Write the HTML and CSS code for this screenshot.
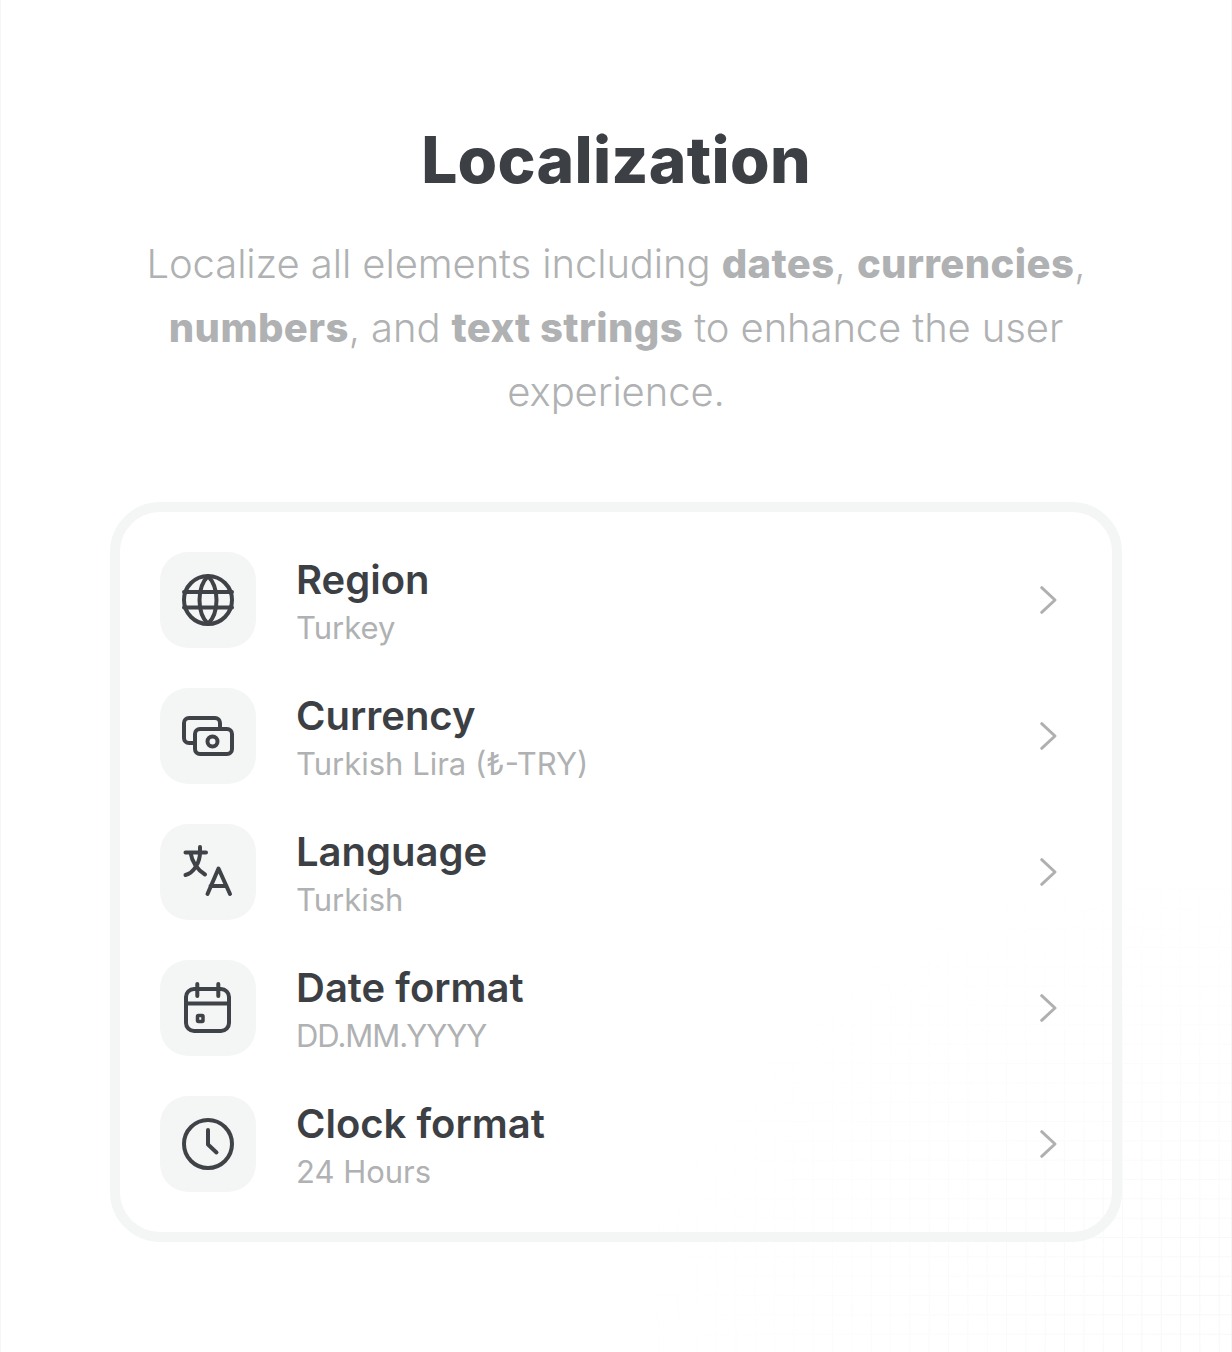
FILE: index.html
```html
<!DOCTYPE html>
<html lang="en">
<head>
<meta charset="utf-8">
<title>Localization</title>
<link rel="stylesheet" href="styles.css">
</head>
<body>
<div class="grid-bg"></div>
<main class="page">
  <h1 class="title">Localization</h1>
  <p class="lead">Localize all elements including <b>dates</b>, <b>currencies</b>, <b>numbers</b>, and <b>text strings</b> to enhance the user experience.</p>
  <section class="card">
    <div class="row">
      <div class="icon-box">
        <svg class="icon" viewBox="0 0 64 64"><circle cx="32" cy="32" r="24"/><path d="M8 24H56M8 39.500H56"/><path d="M32 8C26 14 23.500 24 23.500 32C23.500 40 26 50 32 56C38 50 40.500 40 40.500 32C40.500 24 38 14 32 8Z"/></svg>
      </div>
      <div class="text"><div class="label">Region</div><div class="sub">Turkey</div></div>
      <svg class="chev" viewBox="0 0 48 48"><path d="M17.7 11.700L31 24L17.700 36.300"/></svg>
    </div>
    <div class="row">
      <div class="icon-box">
        <svg class="icon" viewBox="0 0 64 64"><path d="M44 25V19a5 5 0 0 0-5-5H13a5 5 0 0 0-5 5V34a5 5 0 0 0 5 5H19"/><rect x="19" y="25" width="37" height="25" rx="5"/><circle cx="36.500" cy="37.500" r="5"/></svg>
      </div>
      <div class="text"><div class="label">Currency</div><div class="sub">Turkish Lira (₺-TRY)</div></div>
      <svg class="chev" viewBox="0 0 48 48"><path d="M17.7 11.700L31 24L17.700 36.300"/></svg>
    </div>
    <div class="row">
      <div class="icon-box">
        <svg class="icon" viewBox="0 0 64 64"><path d="M9.500 12.500H30M24 7V12.500C24 22 18 33 9.500 35M14.500 12.500C16 22 22 30 29 34.500"/><path d="M31.500 54L42.500 28.500L54 54M34.500 46H50.500"/></svg>
      </div>
      <div class="text"><div class="label">Language</div><div class="sub">Turkish</div></div>
      <svg class="chev" viewBox="0 0 48 48"><path d="M17.7 11.700L31 24L17.700 36.300"/></svg>
    </div>
    <div class="row">
      <div class="icon-box">
        <svg class="icon" viewBox="0 0 64 64"><rect x="10" y="13" width="43" height="42" rx="8"/><path d="M21.300 8V20M42.300 8V20M10 27.500H53"/><rect class="thick" x="21.500" y="39.500" width="5.500" height="6" rx="1"/></svg>
      </div>
      <div class="text"><div class="label">Date format</div><div class="sub tight">DD.MM.YYYY</div></div>
      <svg class="chev" viewBox="0 0 48 48"><path d="M17.7 11.700L31 24L17.700 36.300"/></svg>
    </div>
    <div class="row">
      <div class="icon-box">
        <svg class="icon" viewBox="0 0 64 64"><circle cx="32" cy="32" r="24"/><path d="M32 18V32.500L40.500 40.500"/></svg>
      </div>
      <div class="text"><div class="label">Clock format</div><div class="sub">24 Hours</div></div>
      <svg class="chev" viewBox="0 0 48 48"><path d="M17.7 11.700L31 24L17.700 36.300"/></svg>
    </div>
  </section>
</main>
</body>
</html>
```
FILE: styles.css
```css
* { box-sizing: border-box; }
html, body { margin: 0; padding: 0; height: 100%; }
body {
  position: relative;
  width: 1232px;
  height: 1352px;
  overflow: hidden;
  background: #fff;
  border-left: 1px solid #f6f6f6;
  border-right: 1px solid #f6f6f6;
  font-family: "Inter", "Liberation Sans", sans-serif;
}
.grid-bg {
  position: absolute;
  inset: 0;
  background-image:
    linear-gradient(to right, #f3f5f4 1px, transparent 1px),
    linear-gradient(to bottom, #f3f5f4 1px, transparent 1px);
  background-size: 19.33px 19.33px;
  -webkit-mask-image: radial-gradient(ellipse 600px 500px at 100% 100%, rgba(0,0,0,.8), transparent);
  mask-image: radial-gradient(ellipse 600px 500px at 100% 100%, rgba(0,0,0,.8), transparent);
}
.page {
  position: relative;
  display: flex;
  flex-direction: column;
  align-items: center;
  padding-top: 120px;
}
.title {
  margin: 0;
  font-size: 64px;
  line-height: 80px;
  font-weight: 800;
  letter-spacing: 0.3px;
  color: #3c3f44;
}
.lead {
  width: 960px;
  margin: 32px 0 0;
  font-size: 40px;
  line-height: 64px;
  font-weight: 300;
  letter-spacing: -0.1px;
  color: #afb1b2;
  text-align: center;
}
.lead b { font-weight: 800; letter-spacing: 0.4px; }
.card {
  width: 1012px;
  margin-top: 78px;
  padding: 40px;
  border: 10px solid #f4f6f5;
  border-radius: 50px;
  display: flex;
  flex-direction: column;
  gap: 40px;
}
.row { display: flex; align-items: center; gap: 40px; }
.icon-box {
  flex: none;
  width: 96px;
  height: 96px;
  border-radius: 28px;
  background: #f4f6f5;
  display: flex;
  align-items: center;
  justify-content: center;
}
.icon {
  width: 64px;
  height: 64px;
  fill: none;
  stroke: #3f4247;
  stroke-width: 4;
  stroke-linecap: round;
  stroke-linejoin: round;
}
.icon .thick { stroke-width: 3.500; }
.text { flex: 1; height: 96px; padding-top: 4px; }
.label {
  font-size: 40px;
  line-height: 48px;
  font-weight: 600;
  color: #3c3f44;
}
.sub {
  font-size: 31px;
  line-height: 48px;
  font-weight: 400;
  color: #afb1b2;
}
.sub.tight { letter-spacing: -1px; }
.chev {
  flex: none;
  width: 48px;
  height: 48px;
  fill: none;
  stroke: #aeb0b1;
  stroke-width: 3;
  stroke-linecap: round;
  stroke-linejoin: round;
}
```
